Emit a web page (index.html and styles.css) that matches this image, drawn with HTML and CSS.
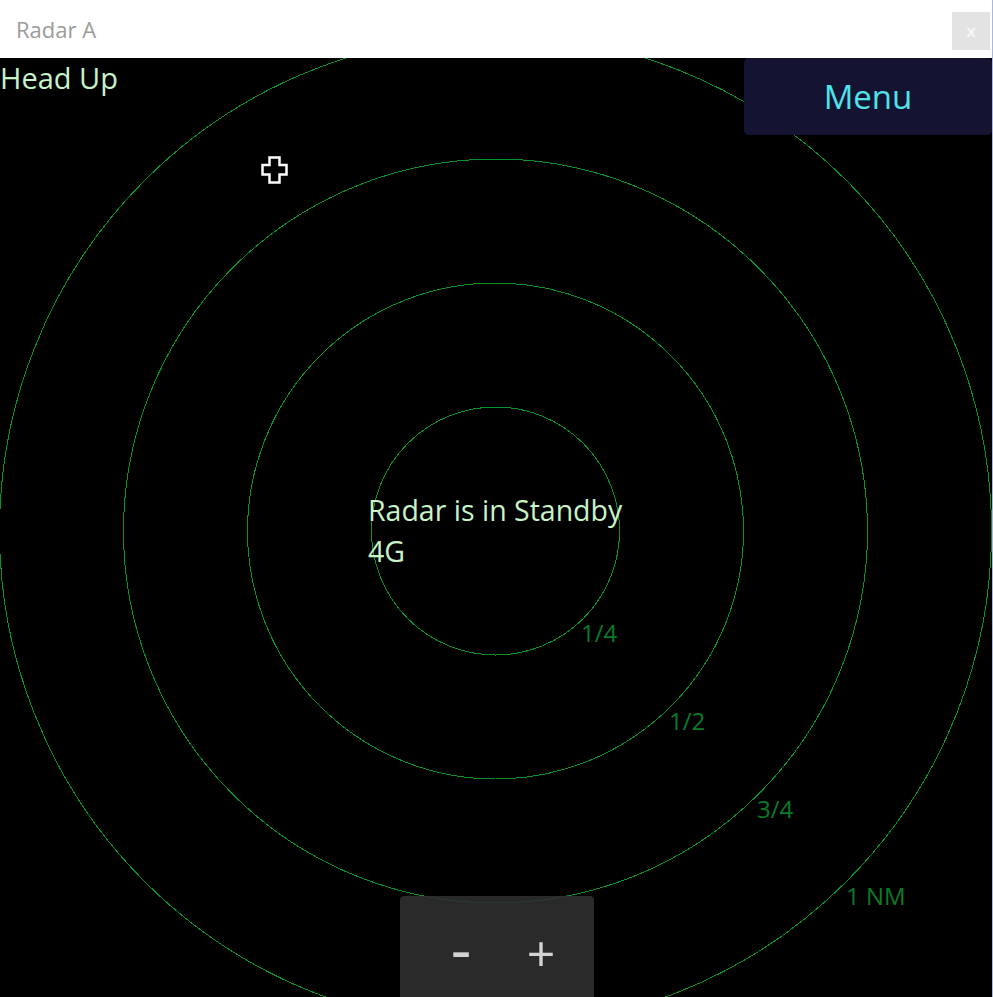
FILE: index.html
```html
<!DOCTYPE html>
<html lang="en">
<head>
<meta charset="utf-8">
<title>Radar A</title>
<link rel="stylesheet" href="styles.css">
</head>
<body>
<div class="window">
  <header class="titlebar">
    <span class="title">Radar A</span>
    <button class="close" type="button">x</button>
  </header>
  <main class="radar">
    <svg class="rings" viewBox="0 0 992 939" xmlns="http://www.w3.org/2000/svg">
      <circle cx="495.5" cy="473" r="124"/>
      <circle cx="495.5" cy="473" r="248"/>
      <circle cx="495.5" cy="473" r="372"/>
      <circle cx="495.5" cy="473" r="496"/>
      <text class="range-label" x="581" y="584">1/4</text>
      <text class="range-label" x="669" y="672">1/2</text>
      <text class="range-label" x="757" y="760">3/4</text>
      <text class="range-label" x="846" y="847">1 NM</text>
    </svg>
    <div class="mode">Head Up</div>
    <button class="menu" type="button">Menu</button>
    <div class="status">Radar is in Standby<br>4G</div>
    <svg class="cursor" viewBox="0 0 27 28" xmlns="http://www.w3.org/2000/svg">
      <polygon points="8.5,1.5 18.5,1.5 18.5,9 25.5,9 25.5,18.5 18.5,18.5 18.5,26.5 8.5,26.5 8.5,18.5 1.5,18.5 1.5,9 8.5,9"/>
    </svg>
    <div class="zoom">
      <button class="zoom-btn minus" type="button">-</button>
      <button class="zoom-btn" type="button">+</button>
    </div>
  </main>
</div>
</body>
</html>
```

FILE: styles.css
```css
html, body {
  margin: 0;
  padding: 0;
  background: #000;
}

body {
  font-family: "Open Sans", "Noto Sans", sans-serif;
}

.window {
  width: 992px;
  height: 997px;
  border-right: 1px solid #a9b9dd;
  display: flex;
  flex-direction: column;
  overflow: hidden;
}

.titlebar {
  flex: none;
  height: 58px;
  box-sizing: border-box;
  background: #fff;
  display: flex;
  align-items: center;
  justify-content: space-between;
  padding: 0 2px 0 16px;
}

.title {
  font-size: 22px;
  color: #9b9b9b;
}

.close {
  width: 38px;
  height: 38px;
  margin-top: 4px;
  padding: 0;
  border: 0;
  background: #e3e3e3;
  color: #f6f6f6;
  font: bold 16px "Open Sans", sans-serif;
}

.radar {
  position: relative;
  flex: 1;
  background: #000;
  overflow: hidden;
}

.rings {
  position: absolute;
  left: 0;
  top: 0;
  width: 992px;
  height: 939px;
}

.rings circle {
  fill: none;
  stroke: #089228;
  stroke-width: 1;
  shape-rendering: crispEdges;
}

.range-label {
  fill: #0b7b27;
  font-family: "Open Sans", sans-serif;
  font-size: 24px;
}

.mode {
  position: absolute;
  left: 0;
  top: 0;
  font-size: 29px;
  line-height: 40px;
  color: #c8f2c8;
}

.menu {
  position: absolute;
  right: 0;
  top: 0;
  width: 248px;
  height: 77px;
  border: 0;
  border-radius: 5px;
  background: #141432;
  color: #4fe3ea;
  font-family: "Open Sans", sans-serif;
  font-size: 33px;
  padding: 0;
}

.status {
  position: absolute;
  left: 368px;
  top: 432px;
  font-size: 28.5px;
  line-height: 41px;
  color: #c8f2c8;
}

.cursor {
  position: absolute;
  left: 261px;
  top: 98px;
  width: 27px;
  height: 28px;
}

.cursor polygon {
  fill: #000;
  stroke: #fff;
  stroke-width: 2.5;
}

.zoom {
  position: absolute;
  left: 400px;
  bottom: 0;
  width: 194px;
  height: 101px;
  box-sizing: border-box;
  padding: 27px 0 0 8px;
  border-radius: 4px 4px 0 0;
  background: rgba(48, 48, 48, 0.88);
  display: flex;
  justify-content: center;
  align-items: flex-start;
}

.zoom-btn {
  width: 80px;
  height: 60px;
  padding: 0;
  border: 0;
  background: transparent;
  color: #d2d2d2;
  font-family: "Open Sans", sans-serif;
  font-size: 50px;
  line-height: 60px;
}

.minus {
  font-size: 64px;
  margin-top: -5px;
}
```
